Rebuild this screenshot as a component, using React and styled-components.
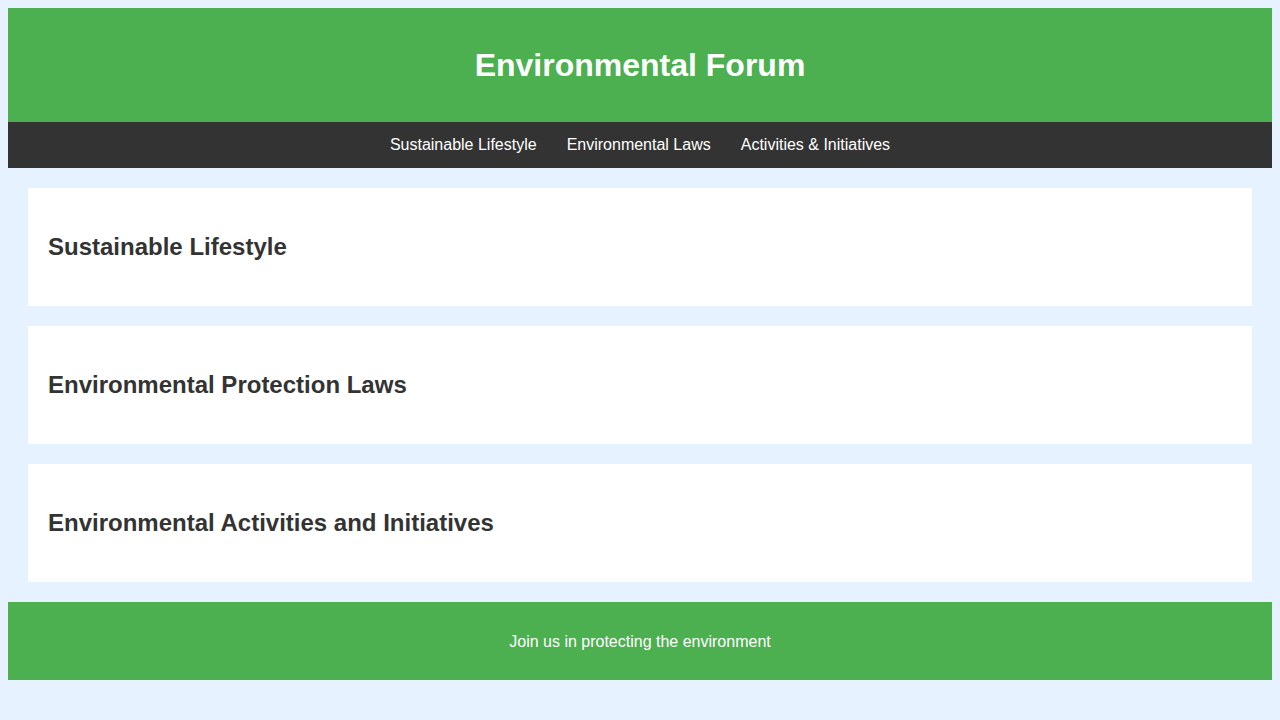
import React from "react";
import styled, { createGlobalStyle } from "styled-components";

const GlobalStyle = createGlobalStyle`
  body {
    margin: 8px;
    background: #e6f2ff;
    color: #333;
    font-family: Arial, "Liberation Sans", sans-serif;
    font-size: 16px;
  }
`;

const Header = styled.header`
  padding: 38px 20px;
  background: #4caf50;
  color: #fff;
  text-align: center;
`;

const Title = styled.h1`
  margin: 0;
  font-size: 32px;
  line-height: 38px;
`;

const Nav = styled.nav`
  display: flex;
  flex-wrap: wrap;
  justify-content: center;
  gap: 0 30px;
  padding: 14px 10px;
  background: #333;
`;

const NavLink = styled.a`
  color: #fff;
  line-height: 18px;
  text-decoration: none;
`;

const Main = styled.main`
  display: grid;
  gap: 20px;
  padding: 20px;
`;

const Section = styled.section`
  padding: 45px 20px 46px;
  background: #fff;
`;

const SectionTitle = styled.h2`
  margin: 0;
  font-size: 24px;
  line-height: 27px;
`;

const Footer = styled.footer`
  padding: 31px 20px 29px;
  background: #4caf50;
  color: #fff;
  text-align: center;
`;

const FooterText = styled.p`
  margin: 0;
  line-height: 18px;
`;

const topics = [
  { id: "lifestyle", link: "Sustainable Lifestyle", title: "Sustainable Lifestyle" },
  { id: "laws", link: "Environmental Laws", title: "Environmental Protection Laws" },
  { id: "activities", link: "Activities & Initiatives", title: "Environmental Activities and Initiatives" },
];

export default function App() {
  return (
    <>
      <GlobalStyle />
      <Header>
        <Title>Environmental Forum</Title>
      </Header>
      <Nav>
        {topics.map((topic) => (
          <NavLink key={topic.id} href={`#${topic.id}`}>{topic.link}</NavLink>
        ))}
      </Nav>
      <Main>
        {topics.map((topic) => (
          <Section key={topic.id} id={topic.id}>
            <SectionTitle>{topic.title}</SectionTitle>
          </Section>
        ))}
      </Main>
      <Footer>
        <FooterText>Join us in protecting the environment</FooterText>
      </Footer>
    </>
  );
}
